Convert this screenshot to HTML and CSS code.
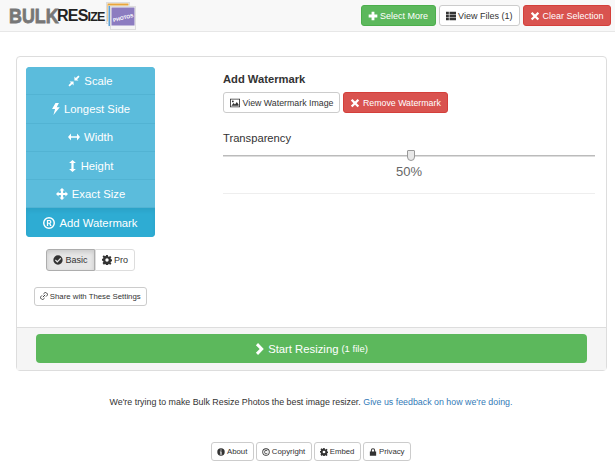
FILE: index.html
```html
<!DOCTYPE html>
<html lang="en">
<head>
<meta charset="utf-8">
<title>Bulk Resize Photos</title>
<link rel="stylesheet" href="styles.css">
</head>
<body>
<svg class="defs" width="0" height="0" aria-hidden="true">
  <symbol id="i-plus" viewBox="0 0 12 12"><path d="M4.3 0.8h3.4v3.5h3.5v3.4H7.7v3.5H4.3V7.700H.8V4.3h3.500z"/></symbol>
  <symbol id="i-list" viewBox="0 0 12 12"><path d="M0 1h3.4v2.9H0zM4.2 1H12v2.9H4.2zM0 4.6h3.4v2.8H0zM4.2 4.6H12v2.8H4.2zM0 8.1h3.4V11H0zM4.2 8.1H12V11H4.2z"/></symbol>
  <symbol id="i-x" viewBox="0 0 12 12"><path d="M2.9 1.2 6 4.300l3.100-3.100 1.900 1.900L7.900 6.200l3.100 3-1.900 1.900L6 8l-3.100 3.100L1 9.200l3.100-3-3.100-3.100z"/></symbol>
  <symbol id="i-scale" viewBox="0 0 14 14"><path d="M7.500 6.500V1.800l1.600 1.600L12 .5 13.500 2l-2.900 2.900 1.600 1.600zM6.500 7.500v4.700l-1.600-1.600L2 13.500.5 12l2.900-2.900-1.600-1.600z"/></symbol>
  <symbol id="i-bolt" viewBox="0 0 10 14"><path d="M5 0h4L6.400 5H10L2.600 14l1.900-7H1z"/></symbol>
  <symbol id="i-width" viewBox="0 0 14 8"><path d="M3.500 0v3h7V0L14 4l-3.500 4V5h-7v3L0 4z"/></symbol>
  <symbol id="i-height" viewBox="0 0 8 14"><path d="M4 0l4 3.500H5.300v7H8L4 14 0 10.500h2.700v-7H0z"/></symbol>
  <symbol id="i-move" viewBox="0 0 14 14"><path d="M7 0l3 3H8.300v2.700H11V4l3 3-3 3V8.300H8.300V11H10l-3 3-3-3h1.700V8.300H3V10L0 7l3-3v1.700h2.700V3H4z"/></symbol>
  <symbol id="i-reg" viewBox="0 0 14 14"><path fill-rule="evenodd" d="M7 0a7 7 0 1 1 0 14A7 7 0 0 1 7 0zm0 1.700a5.300 5.300 0 1 0 0 10.600A5.300 5.300 0 0 0 7 1.700zM4.500 3.500h3.100a2.200 2.200 0 0 1 1.100 4.100l1.300 2.900H8.300L7.200 8H6v2.500H4.500zM6 4.800v2h1.400a1 1 0 0 0 0-2z"/></symbol>
  <symbol id="i-check" viewBox="0 0 14 14"><path fill-rule="evenodd" d="M7 .5a6.500 6.500 0 1 1 0 13 6.500 6.500 0 0 1 0-13zM10.300 4 6 8.300 3.900 6.200 2.700 7.400 6 10.700l5.500-5.500z"/></symbol>
  <symbol id="i-cog" viewBox="0 0 14 14"><path fill-rule="evenodd" d="M5.800 0h2.400l.3 2 1.300.6 1.700-1.200 1.700 1.700-1.200 1.700.6 1.300 2 .3v2.400l-2 .3-.6 1.300 1.200 1.700-1.700 1.700-1.700-1.200-1.300.6-.3 2H5.800l-.3-2-1.300-.6-1.700 1.200L.8 11.100 2 9.400l-.6-1.300-2-.3V5.400l2-.3L2 3.800.8 2.100l1.700-1.700 1.700 1.200 1.300-.6zM7 4.600a2.400 2.400 0 1 0 0 4.800 2.400 2.400 0 0 0 0-4.800z"/></symbol>
  <symbol id="i-link" viewBox="0 0 14 14"><path fill="none" stroke="currentColor" stroke-width="1.700" d="M6 3.500 8 1.600a2.300 2.300 0 0 1 3.300 0l1.100 1.100a2.300 2.300 0 0 1 0 3.300L10.500 8M8 10.500 6 12.400a2.300 2.300 0 0 1-3.300 0L1.600 11.300a2.300 2.300 0 0 1 0-3.300L3.500 6M5 9l4-4"/></symbol>
  <symbol id="i-pic" viewBox="0 0 14 12"><path fill-rule="evenodd" d="M0 0h14v12H0zM1.200 1.200v9.600h11.600V1.200zM2 10l3-4 2 2 2.500-3.500L12 8v2zM4 2.500a1.300 1.300 0 1 1 0 2.600 1.300 1.300 0 0 1 0-2.600z"/></symbol>
  <symbol id="i-chev" viewBox="0 0 10 14"><path d="M3.300 0 10 7l-6.700 7L.8 11.500 5.200 7 .8 2.500z"/></symbol>
  <symbol id="i-info" viewBox="0 0 14 14"><path fill-rule="evenodd" d="M7 .5a6.500 6.500 0 1 1 0 13A6.500 6.500 0 0 1 7 .5zM6 2.500v2h2v-2zM5 6v1.300h1v3H5v1.200h4v-1.200H8V6z"/></symbol>
  <symbol id="i-copy" viewBox="0 0 14 14"><path fill-rule="evenodd" d="M7 .5a6.500 6.500 0 1 1 0 13A6.500 6.500 0 0 1 7 .5zM7 2a5 5 0 1 0 0 10A5 5 0 0 0 7 2zm2.500 6.500-.2 1.200A4 4 0 0 1 7.200 10.300a3.300 3.300 0 1 1 0-6.600c.8 0 1.500.2 2 .5l.2 1.300H8.500l-.2-.7a2 2 0 0 0-1-.2C6 4.800 5.400 5.700 5.400 7s.7 2.200 1.900 2.200c.4 0 .8 0 1.100-.2l.2-.7z"/></symbol>
  <symbol id="i-lock" viewBox="0 0 12 14"><path fill-rule="evenodd" d="M6 .5a3.800 3.800 0 0 1 3.800 3.800V6H11.500v7.500H.5V6h1.700V4.300A3.800 3.800 0 0 1 6 .5zM6 2.300a2 2 0 0 0-2 2V6h4V4.300a2 2 0 0 0-2-2z"/></symbol>
</svg>

<header class="topbar">
  <a class="logo" href="#">
    <span class="logo-bulk">BULK</span>
    <span class="logo-resize">RES<span class="logo-small">IZE</span></span>
    <svg class="logo-pic" width="30" height="30" viewBox="0 0 30 30">
      <rect x=".5" y="1.500" width="23" height="21" fill="#f2f2f2" stroke="#ddd"/>
      <rect x="1.500" y="2.500" width="21" height="18" fill="#e9a63c"/>
      <rect x="2" y="4.500" width="25" height="22" fill="#f2f2f2"/>
      <rect x="2.500" y="5" width="23" height="20" fill="#5a9fd6"/>
      <rect x="4.500" y="5.500" width="25" height="23" fill="#f5f5f5" stroke="#ddd"/>
      <rect x="5.500" y="6.500" width="23" height="18" fill="#8c7cc0"/>
      <text x="17" y="18.500" class="logo-photos" transform="rotate(-14 17 16)">PHOTOS</text>
    </svg>
  </a>
  <nav class="top-actions">
    <a class="btn btn-green" href="#"><svg class="ic"><use href="#i-plus"/></svg>Select More</a>
    <a class="btn btn-white" href="#"><svg class="ic"><use href="#i-list"/></svg>View Files (1)</a>
    <a class="btn btn-red" href="#"><svg class="ic"><use href="#i-x"/></svg>Clear Selection</a>
  </nav>
</header>

<main class="panel">
  <div class="panel-body">
    <aside class="side">
      <ul class="menu">
        <li class="menu-item"><svg class="mi"><use href="#i-scale"/></svg>Scale</li>
        <li class="menu-item"><svg class="mi mi-narrow"><use href="#i-bolt"/></svg>Longest Side</li>
        <li class="menu-item"><svg class="mi"><use href="#i-width"/></svg>Width</li>
        <li class="menu-item"><svg class="mi mi-narrow"><use href="#i-height"/></svg>Height</li>
        <li class="menu-item"><svg class="mi"><use href="#i-move"/></svg>Exact Size</li>
        <li class="menu-item active"><svg class="mi"><use href="#i-reg"/></svg>Add Watermark</li>
      </ul>
      <div class="toggle">
        <a class="tog tog-on" href="#"><svg class="ic-s"><use href="#i-check"/></svg>Basic</a>
        <a class="tog" href="#"><svg class="ic-s"><use href="#i-cog"/></svg>Pro</a>
      </div>
      <a class="mini share" href="#"><svg class="ic-xs"><use href="#i-link"/></svg>Share with These Settings</a>
    </aside>
    <section class="content">
      <h2 class="title">Add Watermark</h2>
      <div class="wm-actions">
        <a class="btn btn-white wm" href="#"><svg class="ic-s"><use href="#i-pic"/></svg>View Watermark Image</a>
        <a class="btn btn-red wm" href="#"><svg class="ic-s"><use href="#i-x"/></svg>Remove Watermark</a>
      </div>
      <div class="label">Transparency</div>
      <div class="slider"><span class="thumb"></span></div>
      <div class="value">50%</div>
      <hr class="rule">
    </section>
  </div>
  <div class="panel-foot">
    <a class="start" href="#"><svg class="ic-c"><use href="#i-chev"/></svg>Start Resizing <small class="start-small">(1 file)</small></a>
  </div>
</main>

<p class="note">We're trying to make Bulk Resize Photos the best image resizer. <a class="note-link" href="#">Give us feedback on how we're doing.</a></p>

<footer class="foot">
  <a class="mini" href="#"><svg class="ic-xs"><use href="#i-info"/></svg>About</a>
  <a class="mini" href="#"><svg class="ic-xs"><use href="#i-copy"/></svg>Copyright</a>
  <a class="mini" href="#"><svg class="ic-xs"><use href="#i-cog"/></svg>Embed</a>
  <a class="mini" href="#"><svg class="ic-xs"><use href="#i-lock"/></svg>Privacy</a>
</footer>
</body>
</html>
```
FILE: styles.css
```css
* { box-sizing: border-box; }
html, body { margin: 0; padding: 0; }
body {
  width: 615px;
  height: 471px;
  overflow: hidden;
  background: #fff;
  color: #333;
  font-family: "Liberation Sans", Arial, sans-serif;
  font-size: 11px;
}
a { text-decoration: none; color: inherit; }
.defs { position: absolute; }
svg { fill: currentColor; flex: none; }

.topbar {
  height: 32px;
  background: #f8f8f8;
  border-bottom: 1px solid #e7e7e7;
  display: flex;
  justify-content: space-between;
  padding: 0 4px 0 9px;
}
.logo { display: flex; align-items: flex-start; }
.logo-bulk {
  display: block;
  width: 46px;
  font-size: 21px;
  font-weight: 700;
  color: #777;
  margin-top: 4px;
  line-height: 23px;
  white-space: nowrap;
  transform: scaleX(.85);
  transform-origin: left center;
  -webkit-text-stroke: .8px #777;
}
.logo-resize {
  font-size: 16px;
  font-weight: 700;
  color: #222;
  margin: 6px 0 0 2px;
  line-height: 20px;
  letter-spacing: -.8px;
}
.logo-small { font-size: 12.500px; }
.logo-pic { margin: 1px 0 0 1px; }
.logo-photos {
  font-size: 5px;
  font-weight: 700;
  fill: #fff;
  text-anchor: middle;
  font-family: "Liberation Sans", sans-serif;
}

.top-actions { display: flex; gap: 3px; padding-top: 5px; }
.btn {
  display: flex;
  align-items: center;
  height: 21px;
  padding: 0 6.500px;
  border: 1px solid transparent;
  border-radius: 3px;
  font-size: 9px;
  white-space: nowrap;
}
.btn-green { background: #5cb85c; border-color: #4cae4c; color: #fff; }
.btn-white { background: #fff; border-color: #ccc; color: #333; }
.btn-red { background: #d9534f; border-color: #d43f3a; color: #fff; }
.ic { width: 10px; height: 10px; margin-right: 2px; }
.mi { width: 12px; height: 12px; margin-right: 4px; }
.mi-narrow { width: 9px; }
.ic-s { width: 10px; height: 10px; margin-right: 2.500px; }
.ic-xs { width: 8px; height: 8px; margin-right: 1.500px; }
.ic-c { width: 9px; height: 12px; margin-right: 4px; }

.panel {
  margin: 24px 8px 0 16px;
  height: 315px;
  border: 1px solid #ddd;
  border-radius: 4px;
  display: flex;
  flex-direction: column;
}
.panel-body { flex: 1; display: flex; padding: 10px 9px 0; }
.side {
  flex: none;
  width: 129px;
  display: flex;
  flex-direction: column;
  align-items: center;
}
.menu {
  width: 100%;
  list-style: none;
  margin: 0;
  padding: 0;
  border-radius: 4px;
  overflow: hidden;
  background: #5bc0de;
}
.menu-item {
  height: 28.300px;
  background: #5bbcdc;
  border-bottom: 1px solid #52b3d3;
  color: #fff;
  font-size: 11.300px;
  display: flex;
  align-items: center;
  justify-content: center;
}
.menu-item.active { background: #2eacd3; border-bottom: 0; box-shadow: inset 0 3px 4px rgba(0, 0, 0, .06); }
.toggle { display: flex; margin-top: 12px; }
.tog {
  height: 22px;
  display: flex;
  align-items: center;
  padding: 0 6px;
  border: 1px solid #ddd;
  background: #fff;
  font-size: 9px;
  border-radius: 0 3px 3px 0;
}
.tog-on {
  background: #e6e6e6;
  border-color: #adadad;
  border-radius: 3px 0 0 3px;
  padding: 0 6px;
  box-shadow: inset 0 2px 4px rgba(0, 0, 0, .125);
}
.mini {
  display: inline-flex;
  align-items: center;
  height: 19px;
  padding: 0 5.500px;
  border: 1px solid #ccc;
  border-radius: 3px;
  background: #fff;
  color: #333;
  font-size: 7.800px;
  white-space: nowrap;
}
.share { margin-top: 16px; }
.content { flex: 1; margin-left: 68px; padding-right: 2px; }
.title { font-size: 11.200px; font-weight: 700; margin: 5px 0 6px; line-height: 14px; color: #333; }
.wm-actions { display: flex; gap: 3px; }
.wm { height: 21px; font-size: 8.800px; padding: 0 6px; }
.label { font-size: 11.200px; line-height: 14px; margin-top: 18px; }
.slider {
  position: relative;
  height: 1px;
  background: #bbb;
  margin-top: 10px;
  box-shadow: 0 1px 0 #ddd;
}
.thumb {
  position: absolute;
  left: 184px;
  top: -5px;
  width: 8px;
  height: 11px;
  background: #e8e8e8;
  border: 1px solid #999;
  border-radius: 1px 1px 4px 4px;
}
.value { text-align: center; font-size: 13px; color: #666; margin-top: 8px; line-height: 16px; }
.rule { border: 0; border-top: 1px solid #eee; margin: 13px 0 0; }
.panel-foot {
  height: 43px;
  background: #f5f5f5;
  border-top: 1px solid #ddd;
  padding: 6px 19px 0;
}
.start {
  display: flex;
  align-items: center;
  justify-content: center;
  height: 29px;
  border-radius: 4px;
  background: #5cb85c;
  color: #fff;
  font-size: 11.300px;
}
.start-small { font-size: 9.500px; margin-left: 3px; }
.note { margin: 25px 0 0; padding-left: 7px; text-align: center; font-size: 8.850px; line-height: 13px; color: #333; }
.note-link { color: #337ab7; }
.foot { display: flex; justify-content: center; gap: 2px; margin-top: 33px; padding-left: 7px; }
```
